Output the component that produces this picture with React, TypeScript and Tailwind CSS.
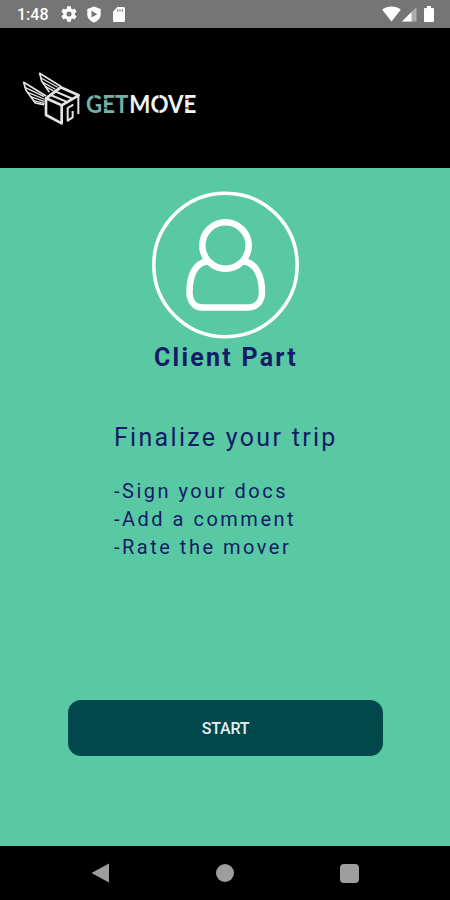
import React from 'react';

const steps = ['-Sign your docs', '-Add a comment', '-Rate the mover'];

const StatusBar: React.FC = () => (
  <div className="h-7 bg-[#757575] flex items-center justify-between pl-[17px] pr-4 text-white">
    <div className="flex items-center">
      <span className="w-[44px] text-[16px] leading-7 font-medium pt-px">1:48</span>
      <svg className="w-4 h-4" viewBox="2 2 20 20" fill="currentColor">
        <path d="M19.14 12.94c.04-.3.06-.61.06-.94s-.02-.64-.07-.94l2.03-1.58a.5.5 0 0 0 .12-.61l-1.92-3.32a.5.5 0 0 0-.59-.22l-2.39.96c-.5-.38-1.03-.7-1.62-.94L14.4 2.81a.48.48 0 0 0-.48-.41h-3.84a.47.47 0 0 0-.47.41l-.36 2.54c-.59.24-1.13.57-1.62.94l-2.39-.96a.48.48 0 0 0-.59.22L2.74 8.87a.47.47 0 0 0 .12.61l2.03 1.58c-.05.3-.09.63-.09.94s.02.64.07.94l-2.03 1.58a.5.5 0 0 0-.12.61l1.92 3.32c.12.22.37.29.59.22l2.39-.96c.5.38 1.03.7 1.62.94l.36 2.54c.05.24.24.41.48.41h3.84c.24 0 .44-.17.47-.41l.36-2.54c.59-.24 1.13-.56 1.62-.94l2.39.96c.22.08.47 0 .59-.22l1.92-3.32a.47.47 0 0 0-.12-.61zM12 15.2a3.2 3.2 0 1 1 0-6.4 3.2 3.2 0 0 1 0 6.4z" />
      </svg>
      <svg className="w-4 h-[17px] ml-[9px]" viewBox="0 0 16 17">
        <path d="M8 .5 1.3 3v5.2c0 3.8 2.8 7 6.7 8.2 3.9-1.2 6.7-4.4 6.7-8.2V3z" fill="currentColor" />
        <path d="M5.5 4.8v6.8l5.8-3.4z" fill="#757575" />
      </svg>
      <svg className="w-3 h-[15px] ml-[11px]" viewBox="0 0 12 15">
        <path d="M4.5 0H10.5A1.5 1.5 0 0 1 12 1.5v12A1.5 1.5 0 0 1 10.5 15h-9A1.5 1.5 0 0 1 0 13.5v-9z" fill="currentColor" />
        <path d="M4.7 2.2v2.5M7 2.2v2.5M9.3 2.2v2.5" stroke="#757575" strokeWidth="1" />
      </svg>
    </div>
    <div className="flex items-center">
      <svg className="w-[19px] h-4" viewBox="0 0 19 16">
        <path d="M9.5 15.5.3 3.8a14.5 14.5 0 0 1 18.4 0z" fill="currentColor" />
      </svg>
      <svg className="w-[15px] h-[15px] ml-px" viewBox="0 0 15 15">
        <path d="M0 14.5 14.5 0v14.5z" fill="#adadad" />
        <path d="M0 14.5 9.5 5v9.5z" fill="currentColor" />
      </svg>
      <svg className="w-[10px] h-4 ml-[7px]" viewBox="0 0 10 16">
        <path d="M3 0h4v2h2a1 1 0 0 1 1 1v12a1 1 0 0 1-1 1H1a1 1 0 0 1-1-1V3a1 1 0 0 1 1-1h2z" fill="currentColor" />
      </svg>
    </div>
  </div>
);

const Logo: React.FC = () => (
  <svg className="w-[190px] h-[75px]" viewBox="0 0 570 225" fill="none" stroke="#e4e4e4">
    {/* Wings */}
    <g strokeWidth="5" strokeLinejoin="round" strokeLinecap="round">
      <path d="M92 107 26 67l7 24 28 38 24 5" />
      <path d="M137 79 74 40l6 23 22 32" />
      <path d="M30 82l56 27M38 97l49 20M47 110l40 14M56 122l31 8" strokeWidth="4" />
      <path d="M78 54l49 27M84 67l36 20M92 80l22 12" strokeWidth="4" />
    </g>
    {/* Box */}
    <g strokeWidth="8" strokeLinejoin="round">
      <path d="M93 115 140 136 140 190 93 165z" />
      <path d="M93 115 137 82 191 106 140 136" />
      <path d="M107 105l52 22M122 95l52 22" strokeWidth="6" />
      <path d="M190 106v56" strokeWidth="6" />
      <path d="M175 134l-17 10v38l15-10v-19" strokeWidth="6" />
    </g>
    <g stroke="none" fontFamily="Lato, sans-serif" fontSize="73" fontWeight="700">
      <text x="213" y="158" fill="#74b0a8" textLength="127" lengthAdjust="spacingAndGlyphs">GET</text>
      <text x="343" y="158" fill="#f4f4f4" textLength="201" lengthAdjust="spacingAndGlyphs">MOVE</text>
    </g>
    {/* Stencil cuts */}
    <path d="M237 102v12M264 118h11M264 144h11M432 103v10M432 149v10M508 118h11M508 144h11" stroke="#000" strokeWidth="3" />
  </svg>
);

const ClientAvatar: React.FC = () => (
  <svg className="w-[148px] h-[148px]" viewBox="0 0 148 148" fill="none" stroke="#fff">
    <circle cx="74.5" cy="74" r="71.7" strokeWidth="3.5" />
    <circle cx="74.5" cy="54.5" r="23.2" strokeWidth="6.5" />
    <path d="M56 70.5C44 72 38.5 85 38.5 101C38.5 110 43 116.5 52 116.5H97C106 116.5 111 110 111 101C111 85 105 72 93 70.5" strokeWidth="6.5" />
  </svg>
);

const NavBar: React.FC = () => (
  <nav className="h-[54px] bg-black flex items-center justify-between px-[91px] text-[#9e9e9e]">
    <svg className="w-[19px] h-5" viewBox="0 0 19 20" fill="currentColor">
      <path d="M.5 10 18 .5v19z" />
    </svg>
    <div className="w-[18px] h-[18px] rounded-full bg-[#9e9e9e]" />
    <div className="w-[19px] h-[19px] rounded-sm bg-[#9e9e9e]" />
  </nav>
);

export default function App() {
  return (
    <div className="w-[450px] h-[900px] flex flex-col bg-[#58c9a3] font-['Roboto',sans-serif] overflow-hidden">
      <StatusBar />
      <header className="h-[140px] bg-black pl-[15px] pt-8">
        <Logo />
      </header>

      <main className="flex-1 flex flex-col items-center pt-[23px] text-[#141c66]">
        <ClientAvatar />
        <h1 className="mt-[5px] text-[25px] leading-7 font-bold tracking-[2.25px] pl-[2px]">Client Part</h1>

        <div className="w-[222px] mt-[50px] whitespace-nowrap">
          <h2 className="text-[25px] leading-8 tracking-[2.3px]">Finalize your trip</h2>
          <ul className="mt-[23px] text-[20px] leading-7 tracking-[2.5px]">
            {steps.map((step) => (
              <li key={step}>{step}</li>
            ))}
          </ul>
        </div>

        <button className="mt-[139px] w-[315px] h-[56px] rounded-[13px] bg-[#00484b] text-[#e8eeee] text-[16px] font-medium tracking-[-0.2px] pl-px pt-0.5">
          START
        </button>
      </main>

      <NavBar />
    </div>
  );
}
